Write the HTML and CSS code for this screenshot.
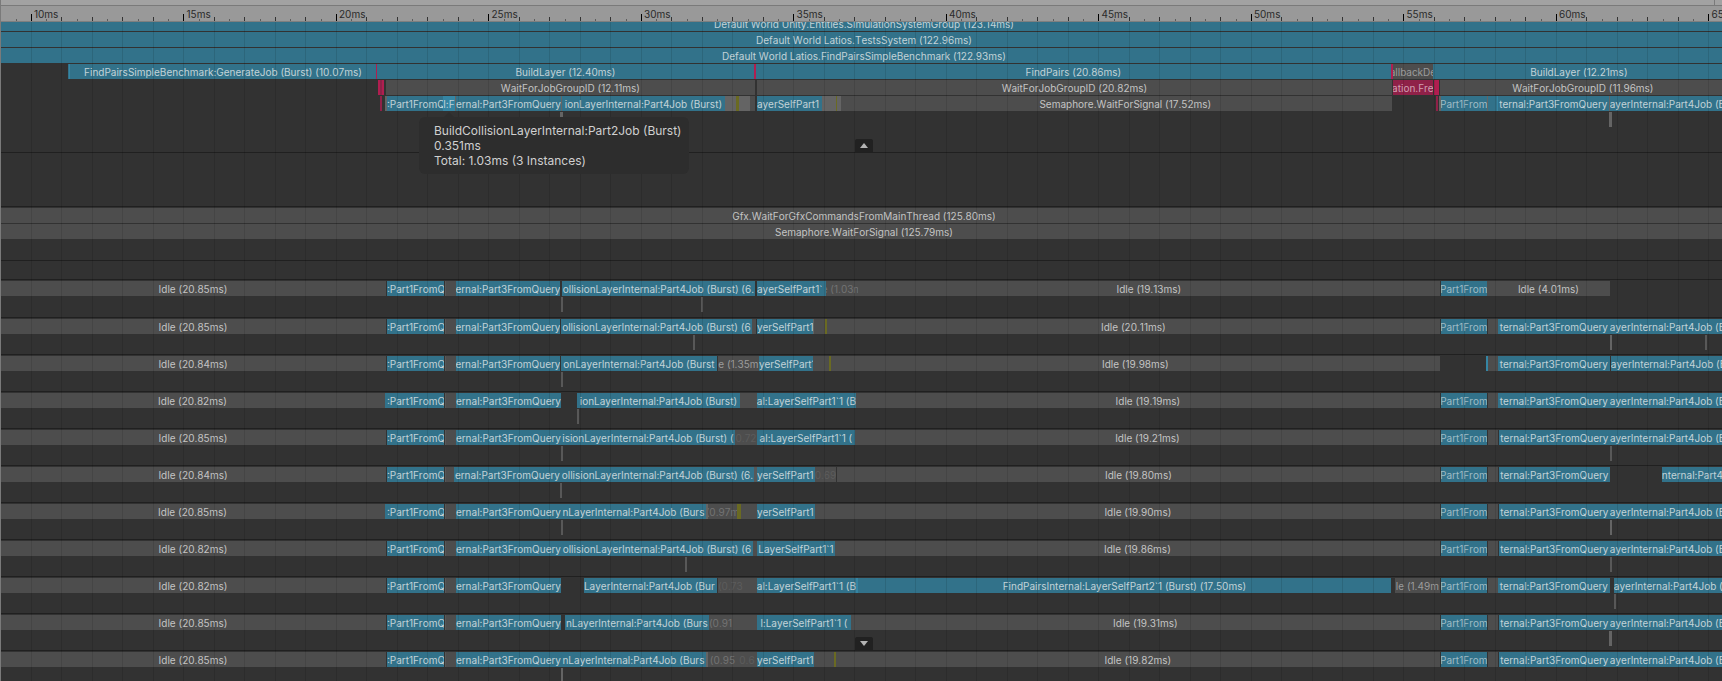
FILE: index.html
```html
<!DOCTYPE html>
<html lang="en">
<head>
<meta charset="utf-8">
<title>Profiler Timeline</title>
<link rel="stylesheet" href="styles.css">
</head>
<body>
<main class="profiler">
  <div class="scroll-strip"><span class="scroll-thumb"></span></div>
  <div class="ruler" id="ruler"></div>
  <div class="tracks">
    <div class="grid-lines" id="grid"></div>
    <section class="thread main-thread" id="main-thread"></section>
    <section class="thread collapsed"></section>
    <section class="thread render-thread" id="render-thread"></section>
    <section class="thread spacer"></section>
    <div class="workers" id="workers"></div>
    <button class="expander expander-up" aria-label="Collapse thread"><svg viewBox="0 0 8 5"><path d="M0 5 L4 0 L8 5 Z"/></svg></button>
    <button class="expander expander-down" aria-label="Expand threads"><svg viewBox="0 0 8 5"><path d="M0 0 L4 5 L8 0 Z"/></svg></button>
    <div class="tooltip" role="tooltip">
      <div>BuildCollisionLayerInternal:Part2Job (Burst)</div>
      <div>0.351ms</div>
      <div>Total: 1.03ms (3 Instances)</div>
    </div>
  </div>
</main>
<script src="timeline.js"></script>
</body>
</html>
```
FILE: styles.css
```css
* { box-sizing: border-box; }
body {
  margin: 0;
  background: #323232;
  color: #c4c4c4;
  font-family: Inter, "Liberation Sans", sans-serif;
  font-size: 10px;
  line-height: 15px;
}
.profiler {
  position: relative;
  display: flex;
  flex-direction: column;
  height: 100vh;
  overflow: hidden;
}
.profiler::before {
  content: "";
  position: absolute;
  inset: 0 auto 0 0;
  width: 1px;
  background: #7a7a7a;
  z-index: 5;
}
.scroll-strip {
  flex: none;
  display: flex;
  height: 6px;
  padding-right: 7px;
  background: #a2a2a2;
  border-bottom: 1px solid #7a7a7a;
}
.scroll-thumb { flex: 1; border-right: 1px solid #7a7a7a; }
.ruler {
  flex: none;
  display: flex;
  align-items: flex-end;
  height: 16px;
  overflow: hidden;
  background: #999;
  border-bottom: 1px solid #7f7f7f;
  color: #2a2a2a;
}
.tick { flex: none; height: 2px; border-left: 1px solid #5c5c5c; }
.tick.whole { height: 4px; border-color: #333; }
.tick.major { height: 7px; border-color: #000; overflow: visible; }
.tick span { display: block; width: 40px; margin: -7px 0 0 2px; }
.tracks {
  position: relative;
  flex: 1;
  overflow: hidden;
}
.grid-lines {
  position: absolute;
  inset: 0;
  display: flex;
  z-index: 1;
  pointer-events: none;
}
.grid-line { flex: none; border-left: 1px solid rgba(0, 0, 0, 0.1); }
.row {
  display: flex;
  height: 15px;
  margin-bottom: 1px;
  overflow: hidden;
  line-height: 17px;
  font-kerning: none;
}
.main-thread { height: 130px; overflow: hidden; }
.main-thread .row:first-child { margin-top: -6px; }
.collapsed { height: 54px; border-top: 1px solid #202020; }
.render-thread { height: 54px; padding-top: 1px; border-top: 1px solid #202020; }
.spacer { height: 19px; border-top: 1px solid #202020; }
.worker { height: 37px; padding-top: 1px; border-top: 1px solid #202020; }
.worker:first-child { height: 38px; }
.bar {
  flex: none;
  display: flex;
  justify-content: center;
  overflow: hidden;
  white-space: nowrap;
}
.bar span { flex: none; }
.bar.start { justify-content: flex-start; }
.system { background: #32728a; color: #c2d2d8; }
.active { background: #3585a3; color: #c2d2d8; }
.part { background: #32728a; color: #9fbcc6; }
.idle { background: #4d4d4d; }
.medium { background: #4d4d4d; color: #9c9c9c; }
.dim { background: #4d4d4d; color: #737373; }
.faint { background: #4d4d4d; color: #5c5c5c; }
.wait { background: #646464; }
.sub { background: #585858; }
.script { background: #6a6a22; }
.physics { background: #8f2148; color: #d0a0b2; }
.alert { background: #b01e50; }
.expander {
  position: absolute;
  left: 855px;
  z-index: 3;
  display: flex;
  align-items: center;
  justify-content: center;
  width: 18px;
  height: 13px;
  padding: 0;
  border: 0;
  border-radius: 2px 2px 0 0;
  background: #212121;
}
.expander svg { width: 8px; height: 5px; fill: #b4b4b4; }
.expander-up { top: 117px; }
.expander-down { top: 615px; }
.tooltip {
  position: absolute;
  z-index: 4;
  top: 95px;
  left: 419px;
  padding: 6px 8px 6px 15px;
  border-radius: 6px;
  background: #2d2d2d;
  color: #d0d0d0;
  font-size: 12px;
  white-space: nowrap;
}
.tooltip::before {
  content: "";
  position: absolute;
  top: -5px;
  left: 25px;
  border: 5px solid transparent;
  border-top: 0;
  border-bottom-color: #2d2d2d;
}
```
FILE: timeline.js
```js
const VIEW = 1722;
const PER_MS = 30.5;
const ORIGIN = 31;
const pct = (n) => (n / VIEW) * 100 + "%";

// A bar is [start, end, kind, label, alignment].
function row(bars) {
  const el = document.createElement("div");
  el.className = "row";
  let cursor = 0;
  for (const [start, end, kind, label, align] of bars) {
    const bar = document.createElement("div");
    bar.className = "bar " + kind + (align ? " " + align : "");
    bar.style.width = pct(end - start);
    if (start !== cursor) bar.style.marginLeft = pct(start - cursor);
    if (label) {
      const text = document.createElement("span");
      text.textContent = label;
      bar.append(text);
    }
    el.append(bar);
    cursor = end;
  }
  return el;
}

function ticks(target, step, make) {
  for (let ms = 9; ms < 66; ms += step) {
    const el = make(ms);
    el.style.width = pct(PER_MS * step);
    if (ms === 9) el.style.marginLeft = pct(ORIGIN - PER_MS);
    target.append(el);
  }
}

ticks(document.getElementById("ruler"), 0.5, (ms) => {
  const el = document.createElement("div");
  el.className = "tick" + (ms % 5 === 0 ? " major" : ms % 1 === 0 ? " whole" : "");
  if (ms % 5 === 0) {
    const text = document.createElement("span");
    text.textContent = ms + "ms";
    el.append(text);
  }
  return el;
});
ticks(document.getElementById("grid"), 1, () => {
  const el = document.createElement("div");
  el.className = "grid-line";
  return el;
});

const P1 = ":Part1FromQ", P3 = "ernal:Part3FromQuery", P3R = "ternal:Part3FromQuery";
const P4R = "ayerInternal:Part4Job (Burst)";

document.getElementById("main-thread").append(
  row([[0, 1728, "system", "Default World Unity.Entities.SimulationSystemGroup (123.14ms)"]]),
  row([[0, 1728, "system", "Default World Latios.TestsSystem (122.96ms)"]]),
  row([[0, 1728, "system", "Default World Latios.FindPairsSimpleBenchmark (122.93ms)"]]),
  row([
    [68, 69, "system"], [69, 70, "active"],
    [70, 376, "system", "FindPairsSimpleBenchmark:GenerateJob (Burst) (10.07ms)"],
    [376, 377, "alert"], [377, 754, "system", "BuildLayer (12.40ms)"],
    [754, 756, "alert"], [756, 1391, "system", "FindPairs (20.86ms)"],
    [1391, 1393, "alert"], [1393, 1433, "medium", "allbackDe"],
    [1433, 1725, "system", "BuildLayer (12.21ms)"]
  ]),
  row([
    [378, 380, "alert"], [380, 382, "physics"], [382, 384, "alert"],
    [386, 755, "idle", "WaitForJobGroupID (12.11ms)"],
    [757, 1392, "idle", "WaitForJobGroupID (20.82ms)"],
    [1393, 1433, "physics", "ation.Fre"], [1434, 1439, "alert"],
    [1440, 1726, "idle", "WaitForJobGroupID (11.96ms)"]
  ]),
  row([
    [380, 382, "physics"], [385, 387, "wait"], [387, 443, "system", P1, "start"],
    [443, 455, "active", "l:F"], [455, 456, "wait"], [456, 561, "system", P3],
    [561, 562, "wait"], [562, 725, "system", "ionLayerInternal:Part4Job (Burst)"],
    [725, 736, "wait"], [736, 739, "script"], [739, 750, "wait"], [750, 755, "idle"],
    [757, 822, "system", "ayerSelfPart1", "start"], [822, 836, "wait"], [836, 837, "script"],
    [837, 841, "wait"], [841, 859, "idle"],
    [859, 1392, "idle", "Semaphore.WaitForSignal (17.52ms)"],
    [1436, 1438, "physics"], [1439, 1441, "wait"], [1441, 1487, "part", "Part1From"],
    [1487, 1488, "wait"], [1488, 1497, "system"], [1497, 1498, "active"],
    [1498, 1609, "system", P3R], [1609, 1610, "wait"], [1610, 1722, "system", P4R, "start"]
  ]),
  row([[560, 563, "wait"], [1609, 1612, "wait"]])
);

document.getElementById("render-thread").append(
  row([[0, 1728, "idle", "Gfx.WaitForGfxCommandsFromMainThread (125.80ms)"]]),
  row([[0, 1728, "idle", "Semaphore.WaitForSignal (125.79ms)"]])
);

const head = (time, p1 = 387, p3 = 456, end = 561) => [
  [0, 386 > p1 ? p1 : 386, "idle", "Idle (" + time + "ms)"],
  ...(p1 < 387 ? [[p1, 387, "system"]] : []),
  [387, 444, "system", P1, "start"], [445, 446, "sub"], [446, p3, "idle"],
  [p3, end, "system", P3]
];
const tail = (p3 = 1499, end = 1610) => [
  [1441, 1487, "part", "Part1From"], [1488, 1498, "idle"],
  [p3, end, "system", P3R]
];
const last = [1610, 1722, "system", P4R, "start"];
const SIX = "ollisionLayerInternal:Part4Job (Burst) (6";
const TEN = "al:LayerSelfPart1`1 (";

const workers = [
  [[...head("20.85", 387, 456, 560), [562, 755, "system", SIX + "."],
    [757, 826, "system", "ayerSelfPart1`", "start"], [826, 858, "dim", "e (1.03m"],
    [858, 1440, "idle", "Idle (19.13ms)"], [1441, 1487, "part", "Part1From"],
    [1487, 1610, "idle", "Idle (4.01ms)"]],
   [[561, 563, "sub"], [701, 703, "sub"]]],
  [[...head("20.85", 387, 456, 560), [561, 752, "system", SIX], [752, 756, "idle"],
    [757, 813, "system", "yerSelfPart1", "start"], [813, 814, "wait"], [814, 825, "idle"],
    [825, 827, "script"], [827, 1440, "idle", "Idle (20.11ms)"], ...tail(1498), last],
   [[693, 695, "sub"], [1610, 1612, "wait"], [1705, 1707, "sub"]]],
  [[...head("20.84", 387, 456, 560), [561, 717, "system", "onLayerInternal:Part4Job (Burst"],
    [718, 759, "medium", "e (1.35m"], [759, 813, "system", "yerSelfPart1", "start"],
    [813, 829, "idle"], [829, 831, "script"], [831, 1440, "idle", "Idle (19.98ms)"],
    [1486, 1488, "active"], [1488, 1498, "idle"], [1498, 1610, "system", P3R],
    [1611, 1722, "system", P4R, "start"]],
   [[561, 563, "sub"]]],
  [[...head("20.82", 385), [577, 740, "system", "ionLayerInternal:Part4Job (Burst)"],
    [740, 757, "idle"], [757, 856, "system", TEN + "B"],
    [856, 1440, "idle", "Idle (19.19ms)"], ...tail(1498), last],
   [[577, 579, "sub"]]],
  [[...head("20.85"), [561, 735, "system", "isionLayerInternal:Part4Job (Burst) ("],
    [735, 757, "faint", "0.72"], [757, 855, "system", TEN],
    [855, 1440, "idle", "Idle (19.21ms)"], ...tail(), last],
   [[561, 563, "sub"], [1610, 1612, "sub"]]],
  [[...head("20.84", 387, 454), [561, 754, "system", SIX + "."], [754, 757, "sub"],
    [757, 815, "system", "yerSelfPart1", "start"], [815, 836, "faint", "0.69"],
    [837, 1440, "idle", "Idle (19.80ms)"], ...tail(),
    [1662, 1722, "system", "nternal:Part4Job", "start"]],
   [[560, 562, "sub"]]],
  [[...head("20.85", 385), [561, 706, "system", "nLayerInternal:Part4Job (Burs"],
    [706, 708, "wait"], [708, 737, "dim", "(0.97m"], [737, 741, "script"], [741, 757, "idle"],
    [757, 815, "system", "yerSelfPart1", "start"], [815, 836, "idle"],
    [836, 1440, "idle", "Idle (19.90ms)"], ...tail(), last],
   [[561, 563, "sub"], [1610, 1612, "wait"]]],
  [[...head("20.82"), [561, 753, "system", SIX], [753, 757, "idle"],
    [757, 835, "system", "LayerSelfPart1`1"], [835, 1440, "idle", "Idle (19.86ms)"],
    ...tail(), last],
   [[685, 687, "sub"], [1610, 1612, "sub"]]],
  [[...head("20.82"), [584, 717, "system", "LayerInternal:Part4Job (Bur", "start"],
    [718, 757, "faint", "(0.73", "start"], [757, 856, "system", TEN + "B"], [856, 858, "active"],
    [858, 1391, "system", "FindPairsInternal:LayerSelfPart2`1 (Burst) (17.50ms)"],
    [1395, 1440, "medium", "le (1.49m"], ...tail(1498),
    [1614, 1722, "system", P4R, "start"]],
   [[1614, 1616, "sub"]]],
  [[...head("20.85"), [565, 709, "system", "nLayerInternal:Part4Job (Burs"],
    [709, 757, "dim", " (0.91", "start"], [757, 851, "system", "l:LayerSelfPart1`1 ("],
    [851, 1440, "idle", "Idle (19.31ms)"], ...tail(), last],
   [[1609, 1612, "wait"]]],
  [[...head("20.85"), [561, 706, "system", "nLayerInternal:Part4Job (Burs"],
    [706, 708, "wait"], [708, 737, "dim", "(0.95"], [737, 757, "faint", "0.6"],
    [757, 814, "system", "yerSelfPart1", "start"], [814, 834, "idle"], [834, 836, "script"],
    [836, 1440, "idle", "Idle (19.82ms)"], ...tail(), last],
   [[561, 563, "wait"]]]
];

for (const rows of workers) {
  const lane = document.createElement("section");
  lane.className = "worker";
  lane.append(...rows.map(row));
  document.getElementById("workers").append(lane);
}
```
